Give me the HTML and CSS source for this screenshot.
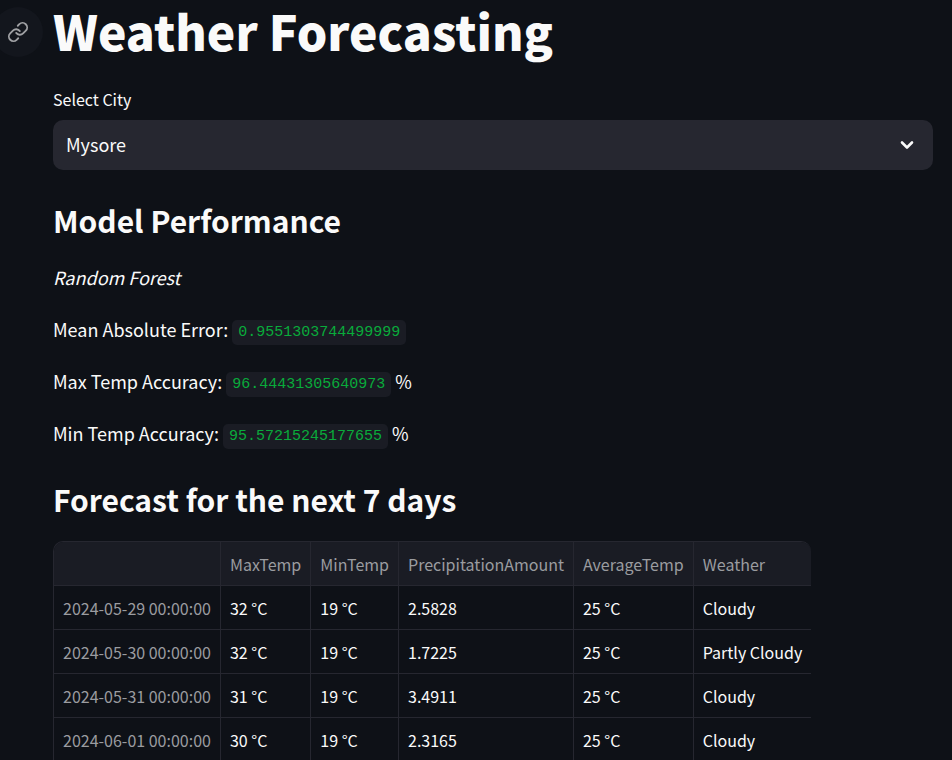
FILE: index.html
```html
<!DOCTYPE html>
<html lang="en">
<head>
<meta charset="utf-8">
<title>Weather Forecasting</title>
<link rel="stylesheet" href="styles.css">
</head>
<body>
<main class="page">
  <header class="title-row">
    <a class="anchor" id="weather-forecasting" href="#weather-forecasting" aria-label="Link to heading">
      <svg viewBox="0 0 24 24" width="22" height="22" fill="none" stroke="currentColor" stroke-width="2" stroke-linecap="round" stroke-linejoin="round"><path d="M10 13a5 5 0 0 0 7.54.54l3-3a5 5 0 0 0-7.07-7.07l-1.72 1.71"/><path d="M14 11a5 5 0 0 0-7.54-.54l-3 3a5 5 0 0 0 7.07 7.07l1.71-1.71"/></svg>
    </a>
    <h1>Weather Forecasting</h1>
  </header>

  <div class="field">
    <label for="city">Select City</label>
    <div class="select-box">
      <select id="city"><option>Mysore</option></select>
      <svg class="chevron" viewBox="0 0 14 10" width="14" height="10" fill="none" stroke="currentColor" stroke-width="2.6" stroke-linecap="round" stroke-linejoin="round"><path d="M2 2.5l5 5 5-5"/></svg>
    </div>
  </div>

  <section class="performance">
    <h2>Model Performance</h2>
    <p><em>Random Forest</em></p>
    <p>Mean Absolute Error: <code>0.9551303744499999</code></p>
    <p>Max Temp Accuracy: <code>96.44431305640973</code> %</p>
    <p>Min Temp Accuracy: <code>95.57215245177655</code> %</p>
  </section>

  <section class="forecast">
    <h2>Forecast for the next 7 days</h2>
    <div class="table-wrap">
      <table>
        <thead>
          <tr><td></td><th scope="col">MaxTemp</th><th scope="col">MinTemp</th><th scope="col">PrecipitationAmount</th><th scope="col">AverageTemp</th><th scope="col">Weather</th></tr>
        </thead>
        <tbody>
          <tr><th scope="row">2024-05-29 00:00:00</th><td>32 °C</td><td>19 °C</td><td>2.5828</td><td>25 °C</td><td>Cloudy</td></tr>
          <tr><th scope="row">2024-05-30 00:00:00</th><td>32 °C</td><td>19 °C</td><td>1.7225</td><td>25 °C</td><td>Partly Cloudy</td></tr>
          <tr><th scope="row">2024-05-31 00:00:00</th><td>31 °C</td><td>19 °C</td><td>3.4911</td><td>25 °C</td><td>Cloudy</td></tr>
          <tr><th scope="row">2024-06-01 00:00:00</th><td>30 °C</td><td>19 °C</td><td>2.3165</td><td>25 °C</td><td>Cloudy</td></tr>
        </tbody>
      </table>
    </div>
  </section>
</main>
</body>
</html>
```
FILE: styles.css
```css
* { box-sizing: border-box; }

body {
  margin: 0;
  background: #0e1117;
  color: #fafafa;
  font-family: "Noto Sans CJK JP", "Open Sans", sans-serif;
  font-size: 18px;
  line-height: 32px;
}

.page { padding: 0 19px 0 53px; }

h1, h2, p { margin: 0; }

.title-row { position: relative; padding-bottom: 28px; }

h1 { font-size: 48px; font-weight: 900; line-height: 60px; }

.anchor {
  position: absolute;
  top: 7px;
  left: -60px;
  width: 50px;
  height: 50px;
  display: grid;
  place-items: center;
  border-radius: 50%;
  background: #13161d;
  color: #a0a1a4;
}

.field label { display: block; font-size: 16px; line-height: 22px; margin-bottom: 10px; }

.select-box { position: relative; }

select {
  appearance: none;
  display: block;
  width: 100%;
  height: 50px;
  padding: 0 13px 2px;
  border: 0;
  border-radius: 10px;
  background: #262730;
  color: inherit;
  font: inherit;
}

.chevron { position: absolute; right: 19px; top: 20px; pointer-events: none; }

h2 { font-size: 30px; font-weight: 700; line-height: 44px; }

.performance { padding-top: 28px; }
.performance h2 { margin-bottom: 19px; }
.performance p { margin-bottom: 20px; }

code {
  padding: 4px 6px;
  border-radius: 5px;
  background: #1a1c24;
  color: #09ab3b;
  font-family: "Liberation Mono", monospace;
  font-size: 15px;
  line-height: 16px;
  vertical-align: 1px;
}

.forecast { padding-top: 8px; }
.forecast h2 { margin-bottom: 20px; }

.table-wrap {
  width: fit-content;
  max-width: 100%;
  overflow: hidden;
  border: 1px solid #262730;
  border-width: 1px 0 0 1px;
  border-radius: 10px 10px 0 0;
}

table { border-collapse: separate; border-spacing: 0; font-size: 16px; line-height: 24px; }

th, td {
  height: 44px;
  padding: 9px;
  border-right: 1px solid #262730;
  border-bottom: 1px solid #262730;
  font-weight: 400;
  text-align: left;
  white-space: nowrap;
}

tr > :last-child { border-right: 0; }
th { color: #9b9ca0; }
thead th, thead td { background: #1a1c24; }
```
